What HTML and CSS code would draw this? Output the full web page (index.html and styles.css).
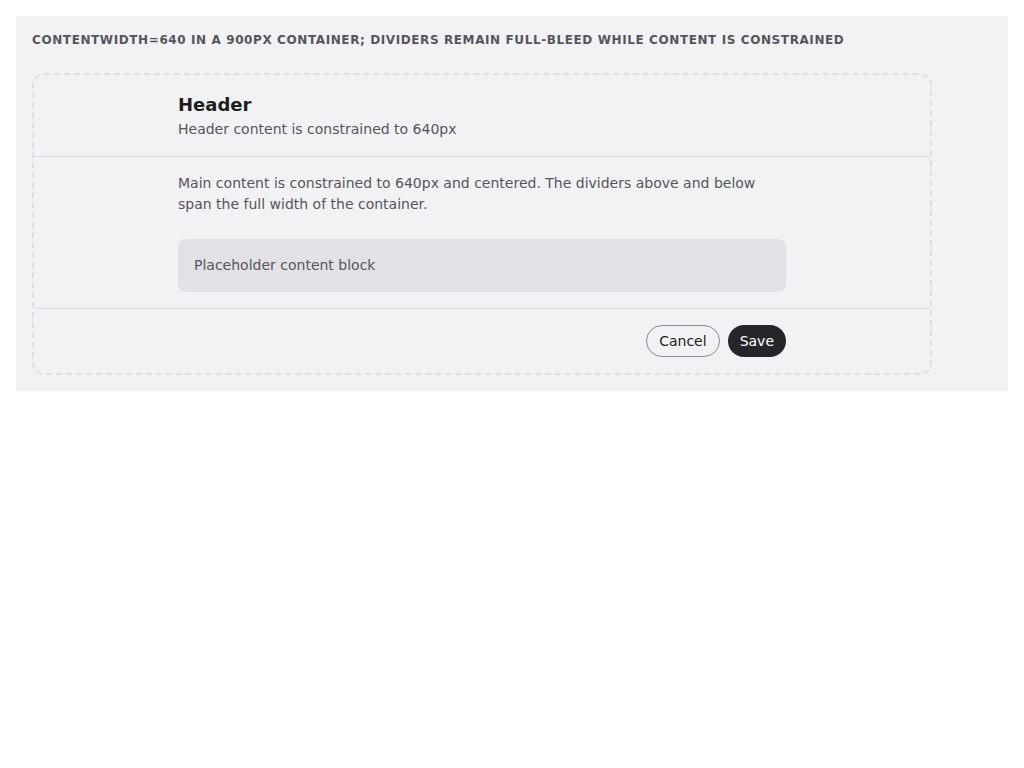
FILE: index.html
```html
<!DOCTYPE html>
<html lang="en">
<head>
<meta charset="utf-8">
<title>Content width demo</title>
<link rel="stylesheet" href="styles.css">
</head>
<body>
<div class="page">
  <div class="label">contentWidth=640 in a 900px container; dividers remain full-bleed while content is constrained</div>
  <div class="panel">
    <div class="section header">
      <div class="inner">
        <div class="title">Header</div>
        <div class="subtitle">Header content is constrained to 640px</div>
      </div>
    </div>
    <div class="section main">
      <div class="inner">
        <p class="text">Main content is constrained to 640px and centered. The dividers above and below span the full width of the container.</p>
        <div class="placeholder">Placeholder content block</div>
      </div>
    </div>
    <div class="section footer">
      <div class="inner actions">
        <button class="btn btn-secondary">Cancel</button>
        <button class="btn btn-primary">Save</button>
      </div>
    </div>
  </div>
</div>
</body>
</html>
```
FILE: styles.css
```css
html, body {
  margin: 0;
  padding: 0;
  background: #ffffff;
}
body {
  font-family: "DejaVu Sans", sans-serif;
  color: #55555e;
}
.page {
  margin: 16px;
  padding: 16px;
  background: #f2f2f4;
}
.label {
  font-size: 12px;
  font-weight: bold;
  text-transform: uppercase;
  letter-spacing: 0.05em;
  line-height: 16px;
  color: #55555e;
  margin-bottom: 25px;
}
.panel {
  width: 900px;
  box-sizing: border-box;
  border: 2px dashed #dfdfe3;
  border-radius: 12px;
}
.section + .section {
  border-top: 1px solid #dcdce0;
}
.inner {
  max-width: 640px;
  margin: 0 auto;
  padding: 16px;
  box-sizing: border-box;
}
.title {
  font-size: 18px;
  font-weight: bold;
  line-height: 27px;
  color: #1d1d22;
}
.subtitle {
  font-size: 14px;
  line-height: 21px;
  margin-top: 1px;
}
.text {
  margin: 0 0 24px;
  font-size: 14px;
  line-height: 21px;
}
.placeholder {
  background: #e2e1e6;
  border-radius: 8px;
  padding: 16px;
  font-size: 14px;
  line-height: 21px;
}
.actions {
  display: flex;
  justify-content: flex-end;
  gap: 8px;
}
.btn {
  font-family: "DejaVu Sans", sans-serif;
  font-size: 14px;
  height: 32px;
  padding: 0 12px;
  border-radius: 16px;
  box-sizing: border-box;
  cursor: pointer;
}
.btn-secondary {
  background: transparent;
  border: 1px solid #8a8a90;
  color: #1d1d22;
}
.btn-primary {
  background: #26262a;
  border: none;
  color: #ffffff;
}
```
